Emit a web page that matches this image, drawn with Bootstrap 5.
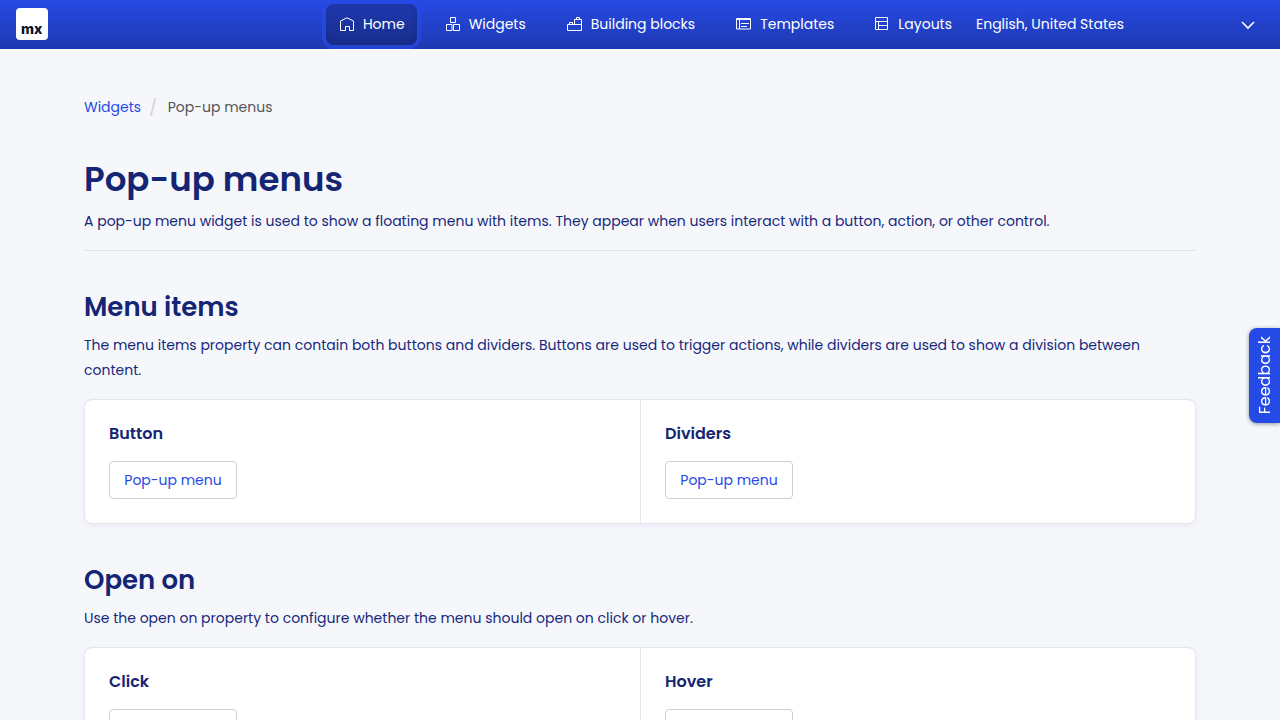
<!DOCTYPE html>
<html lang="en">
<head>
<meta charset="utf-8">
<meta name="viewport" content="width=device-width, initial-scale=1">
<title>Pop-up menus</title>
<link href="https://cdn.jsdelivr.net/npm/bootstrap@5.3.0/dist/css/bootstrap.min.css" rel="stylesheet">
<script src="https://cdn.jsdelivr.net/npm/bootstrap@5.3.0/dist/js/bootstrap.bundle.min.js" defer></script>
<style>
:root { --brand: #264ae5; --navy: #142573; --line: #e4e4f0; }
body { font-family: Poppins, Inter, sans-serif; font-size: 14px; line-height: 25px; color: #16287c; background: #f6f7fb; }
a { color: var(--brand); }
h1, h2, h3 { color: var(--navy); font-weight: 600; }
.topbar { min-height: 49px; background: linear-gradient(#264ae5, #1e39b0); }
.topbar .nav { gap: 15px; }
.topbar .nav-link { display: flex; align-items: center; gap: 9px; padding: 8px 12px 8px 14px; border-radius: 8px; color: #fff; line-height: 25px; white-space: nowrap; }
.topbar .nav-link svg { flex: none; margin-bottom: 2px; }
.topbar .nav-link.active { background: linear-gradient(#1e39b0, #182d8a); box-shadow: 0 0 0 4px #264ae5b0, inset 0 0 5px #14257366; }
.logo text { font: 800 14px Inter, sans-serif; fill: #0a1325; }
.language { width: 300px; height: 40px; padding: 0 36px 0 12px; border: 0; font-size: 14px; color: #fff; background-color: transparent; background-size: 16px; background-position: right 8px center;
  background-image: url("data:image/svg+xml,%3csvg xmlns='http://www.w3.org/2000/svg' viewBox='0 0 16 16'%3e%3cpath fill='none' stroke='%23fff' stroke-width='1.6' d='m2 5 6 6 6-6'/%3e%3c/svg%3e"); }
.language option { color: var(--navy); }
.page { padding: 46px 14px 48px; }
.breadcrumb { --bs-breadcrumb-divider-color: #ced0d3; --bs-breadcrumb-item-active-color: #555; --bs-breadcrumb-item-padding-x: 8px; }
.breadcrumb-item + .breadcrumb-item::before { padding-right: 11px; font-size: 16px; }
.title { font-size: 34px; line-height: 38px; margin-bottom: 11px; }
.section-title { font-size: 26px; line-height: 32px; margin-bottom: 10px; }
.example-title { font-size: 16px; line-height: 20px; margin-bottom: 17px; }
.intro { border-bottom: 1px solid var(--line); padding-bottom: 16px; }
.example { border: 1px solid var(--line); border-radius: 8px; box-shadow: 0 2px 4px #d8daf070; }
.example .col-6 { padding: 24px; }
.example .col-6 + .col-6 { border-left: 1px solid var(--line); }
.btn-menu { --bs-btn-color: #264ae5; --bs-btn-border-color: #ced0de; --bs-btn-hover-color: #264ae5; --bs-btn-hover-border-color: #264ae5; width: 128px; height: 38px; padding: 0; font-size: 14px; border-radius: 4px; background: #fff; }
.feedback { position: fixed; right: 0; top: 328px; width: 31px; height: 95px; padding: 0; border: 0; border-radius: 8px 0 0 8px; background: var(--brand); color: #fff; font-size: 16px; box-shadow: 0 1px 4px #0006; }
.feedback span { writing-mode: vertical-rl; transform: rotate(180deg); }
</style>
</head>
<body>
<header class="topbar d-flex align-items-start justify-content-between px-3">
  <a class="my-2" href="#" aria-label="Mendix">
    <svg class="logo d-block" width="32" height="32" viewBox="0 0 32 32" aria-hidden="true"><rect width="32" height="32" rx="4" fill="#fff"/><text x="5" y="26">mx</text></svg>
  </a>
  <div class="d-flex align-items-center align-self-center">
    <nav class="nav flex-nowrap" aria-label="Main">
      <a class="nav-link active" aria-current="page" href="#"><svg width="14" height="14" viewBox="0 0 14 14" fill="none" stroke="#fff" aria-hidden="true"><path d="M.5 4 7 .8 13.500 4v9.500h-4v-4h-4v4h-5z"/></svg>Home</a>
      <a class="nav-link" href="#"><svg width="14" height="14" viewBox="0 0 14 14" fill="none" stroke="#fff" aria-hidden="true"><path d="M4.500.5h5v5h-5zM.5 7.500H6v6H.5zM7.500 7.500h6v6h-6z"/></svg>Widgets</a>
      <a class="nav-link" href="#"><svg width="15" height="14" viewBox="0 0 15 14" fill="none" stroke="#fff" aria-hidden="true"><path d="M.5 7.500h14v6H.5zM2.500 7.500v-2h3v2M7.500 7.500v-5h7v5M9.500 2.500v-2h3v2"/></svg>Building blocks</a>
      <a class="nav-link" href="#"><svg width="15" height="12" viewBox="0 0 15 12" fill="none" stroke="#fff" aria-hidden="true"><path d="M.5.5h14v10.500H.5zM.5 1.500h14M3.500 2v9M5 5.500h8M5 8.500h6"/></svg>Templates</a>
      <a class="nav-link" href="#"><svg width="14" height="14" viewBox="0 0 14 14" fill="none" stroke="#fff" aria-hidden="true"><path d="M.5.5h12v12H.5zM.5 4.500h12M3.500 4.500v8M3.500 8.500h9"/></svg>Layouts</a>
    </nav>
    <select class="form-select language" aria-label="Language"><option>English, United States</option></select>
  </div>
</header>

<main class="container page">
  <nav aria-label="Breadcrumb">
    <ol class="breadcrumb mb-0">
      <li class="breadcrumb-item"><a class="text-decoration-none" href="#">Widgets</a></li>
      <li class="breadcrumb-item active" aria-current="page">Pop-up menus</li>
    </ol>
  </nav>

  <div class="intro mt-4 pt-3">
    <h1 class="title">Pop-up menus</h1>
    <p class="mb-0">A pop-up menu widget is used to show a floating menu with items. They appear when users interact with a button, action, or other control.</p>
  </div>

  <section class="mt-4 pt-3">
    <h2 class="section-title">Menu items</h2>
    <p class="mb-3">The menu items property can contain both buttons and dividers. Buttons are used to trigger actions, while dividers are used to show a division between content.</p>
    <div class="example bg-white">
      <div class="row g-0">
        <div class="col-6"><h3 class="example-title">Button</h3><button type="button" class="btn btn-menu d-block">Pop-up menu</button></div>
        <div class="col-6"><h3 class="example-title">Dividers</h3><button type="button" class="btn btn-menu d-block">Pop-up menu</button></div>
      </div>
    </div>
  </section>

  <section class="mt-4 pt-3">
    <h2 class="section-title">Open on</h2>
    <p class="mb-3">Use the open on property to configure whether the menu should open on click or hover.</p>
    <div class="example bg-white">
      <div class="row g-0">
        <div class="col-6"><h3 class="example-title">Click</h3><button type="button" class="btn btn-menu d-block">Pop-up menu</button></div>
        <div class="col-6"><h3 class="example-title">Hover</h3><button type="button" class="btn btn-menu d-block">Pop-up menu</button></div>
      </div>
    </div>
  </section>
</main>

<button type="button" class="feedback d-flex align-items-center justify-content-center"><span>Feedback</span></button>
</body>
</html>
